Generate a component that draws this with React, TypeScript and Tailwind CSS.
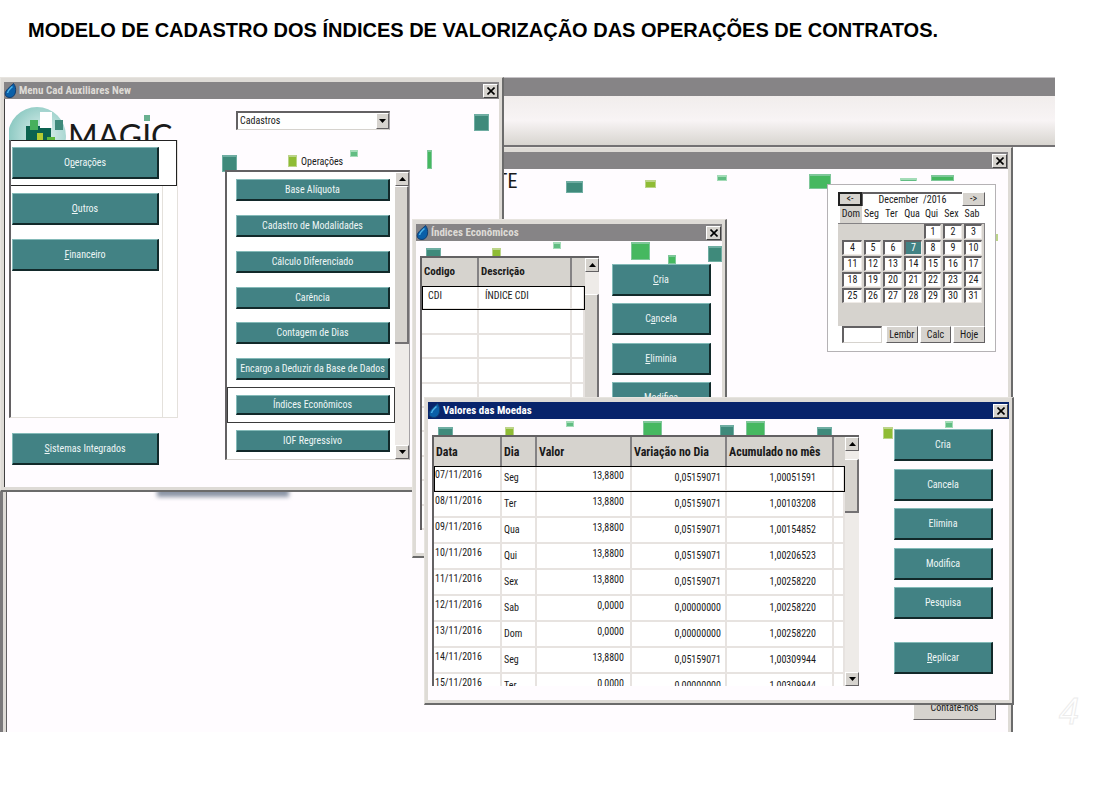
import React, { FC, ReactNode } from 'react';
import clsx from 'clsx';

type Tone = 'teal' | 'green' | 'lime' | 'mint';
type Square = [x: number, y: number, w: number, h: number, tone: Tone];

const TONES: Record<Tone, { fill: string; edge: string }> = {
  teal: { fill: '#3f8a7b', edge: '#6fada2' },
  green: { fill: '#46b860', edge: '#7fc79a' },
  lime: { fill: '#8fbc35', edge: '#bcd48a' },
  mint: { fill: '#62bd83', edge: '#a4dcb8' },
};

const Squares: FC<{ items: Square[] }> = ({ items }) => (
  <svg className="pointer-events-none absolute inset-0 size-full" aria-hidden="true">
    {items.map(([x, y, w, h, tone]) => (
      <g key={`${x}-${y}`}>
        <rect x={x} y={y} width={w} height={h} fill={TONES[tone].edge} />
        <rect x={x + 1} y={y + 2} width={w - 2} height={Math.max(h - 3, 1)} fill={TONES[tone].fill} />
      </g>
    ))}
  </svg>
);

const Drop: FC = () => (
  <svg width="13" height="15" viewBox="0 0 13 15" aria-hidden="true">
    <path d="M9.500 0.500C11.500 3 12 6 11.500 9c-.5 3-2.500 5.500-5.500 5.500C3 14.500 1 13 1.200 10.500 1.500 7 6 4 9.500 0.500Z" fill="#0a5fa8" stroke="#123d70" />
    <path d="M8.500 3.500c-2 2-4.500 3.500-5 6.500" fill="none" stroke="#4fb4e8" strokeWidth="1.500" />
  </svg>
);

const CloseButton: FC = () => (
  <button
    type="button"
    aria-label="Fechar"
    className="flex h-[14px] w-[15px] items-center justify-center border border-t-white border-r-[#404040] border-b-[#404040] border-l-white bg-[#d6d3ce]"
  >
    <svg width="8" height="8" viewBox="0 0 8 8" aria-hidden="true">
      <path d="M0.500 0.500l7 7M7.500 0.500l-7 7" stroke="#000" strokeWidth="1.600" />
    </svg>
  </button>
);

interface WindowProps {
  title?: string;
  active?: boolean;
  className: string;
  children: ReactNode;
}

const Window: FC<WindowProps> = ({ title, active, className, children }) => (
  <section
    className={clsx(
      'absolute flex flex-col border-t border-r-2 border-b-2 border-l border-t-[#e7e4df] border-r-[#6b6b6b] border-b-[#6b6b6b] border-l-[#e7e4df] bg-[#dedbd6] p-[3px] pt-1',
      className,
    )}
  >
    <header
      className={clsx(
        'flex h-[17px] shrink-0 items-center justify-between pr-px',
        active ? 'bg-[#08246b] text-white' : 'bg-[#868486] text-[#dedbd6]',
      )}
    >
      <div className="flex items-center gap-0.5">
        {title && <Drop />}
        <h2 className="text-[11px] font-bold whitespace-nowrap">{title}</h2>
      </div>
      <CloseButton />
    </header>
    <div className="relative min-h-0 flex-1 bg-[#fffcff]">{children}</div>
  </section>
);

interface TealButtonProps {
  label: string;
  hotkey?: number;
  className?: string;
}

const TealButton: FC<TealButtonProps> = ({ label, hotkey, className }) => (
  <button
    type="button"
    className={clsx(
      'flex items-center justify-center border-t border-r-2 border-b-2 border-l border-t-[#84bab8] border-r-[#12292a] border-b-[#12292a] border-l-[#84bab8] bg-[#428284] pt-px whitespace-nowrap text-[#eef6f6]',
      className,
    )}
  >
    {hotkey === undefined ? (
      label
    ) : (
      <span>
        {label.slice(0, hotkey)}
        <u>{label[hotkey]}</u>
        {label.slice(hotkey + 1)}
      </span>
    )}
  </button>
);

const ArrowButton: FC<{ down?: boolean }> = ({ down }) => (
  <button
    type="button"
    aria-label={down ? 'Descer' : 'Subir'}
    className="flex h-[14px] w-full shrink-0 items-center justify-center border border-t-white border-r-[#636163] border-b-[#636163] border-l-white bg-[#d6d3ce]"
  >
    <svg width="7" height="4" viewBox="0 0 7 4" aria-hidden="true">
      <path d={down ? 'M0 0h7L3.500 4Z' : 'M0 4h7L3.500 0Z'} fill="#000" />
    </svg>
  </button>
);

const ScrollBar: FC<{ thumb: string }> = ({ thumb }) => (
  <div className="flex w-[14px] shrink-0 flex-col bg-[#eeebe8]">
    <ArrowButton />
    <div className="min-h-0 flex-1 overflow-hidden">
      <div className={clsx('border-t border-r-2 border-b-2 border-t-white border-r-[#737173] border-b-[#737173] bg-[#d6d3ce]', thumb)} />
    </div>
    <ArrowButton down />
  </div>
);

const MagicLogo: FC = () => (
  <svg width="169" height="41" viewBox="0 0 169 41" className="block" role="img" aria-label="Magic">
    <defs>
      <radialGradient id="globe" cx="0.6" cy="0.5" r="0.6">
        <stop offset="0" stopColor="#e4f3f1" />
        <stop offset="1" stopColor="#8cc9c2" />
      </radialGradient>
    </defs>
    <circle cx="28" cy="37" r="29" fill="url(#globe)" />
    <rect x="17" y="27" width="25" height="14" fill="#0c6350" />
    <rect x="21" y="21" width="8" height="10" fill="#46b05c" />
    <rect x="31" y="13" width="12" height="16" fill="#fff" />
    <rect x="46" y="21" width="8" height="10" fill="#3f8a7b" />
    <rect x="28" y="34" width="6" height="7" fill="#b4cc32" />
    <rect x="38" y="38" width="8" height="3" fill="#5cb83c" />
    <text x="59" y="49" fontFamily="Lato, sans-serif" fontSize="32" fill="#1a1a1a">
      MAGIC
    </text>
    <rect x="135" y="16" width="6" height="6" fill="#6ab090" />
  </svg>
);

const operations = [
  'Base Alíquota',
  'Cadastro de Modalidades',
  'Cálculo Diferenciado',
  'Carência',
  'Contagem de Dias',
  'Encargo a Deduzir da Base de Dados',
  'Índices Econômicos',
  'IOF Regressivo',
];

const MenuWindow: FC = () => (
  <Window title="Menu Cad Auxiliares New" className="top-0 left-0 h-[415px] w-[504px]">
    <Squares
      items={[
        [218, 56, 15, 17, 'teal'],
        [284, 56, 9, 12, 'lime'],
        [346, 51, 8, 7, 'mint'],
        [423, 51, 5, 19, 'green'],
        [470, 15, 15, 17, 'teal'],
      ]}
    />
    <div className="relative flex h-full border-l border-[#404040] pl-1">
      <div className="w-[169px]">
        <MagicLogo />
        <div className="flex h-[278px] border-r border-b border-l-2 border-[#e4e1dc] border-l-[#636163] bg-white">
          <div className="w-full">
            <div className="h-[46px] border border-l-0 border-[#222] pt-[6px] pl-px">
              <TealButton label="Operações" hotkey={1} className="h-8 w-[147px]" />
            </div>
            <div className="flex h-[46px] w-[152px] items-center border-r border-[#e4e1dc] pl-px">
              <TealButton label="Outros" hotkey={0} className="h-8 w-[147px]" />
            </div>
            <div className="flex h-[46px] w-[152px] items-center border-r border-[#e4e1dc] pl-px">
              <TealButton label="Financeiro" hotkey={0} className="h-8 w-[147px]" />
            </div>
            <div className="h-[139px] w-[152px] border-r border-[#e4e1dc]" />
          </div>
        </div>
        <TealButton label="Sistemas Integrados" hotkey={0} className="mt-[15px] ml-[3px] h-8 w-[147px]" />
      </div>
      <div className="ml-[47px] w-[185px] pt-3">
        <div className="relative ml-[11px] h-[19px] w-[154px]">
          <select
            aria-label="Menu"
            className="block size-full appearance-none border-t-2 border-r border-b border-l-2 border-t-[#636163] border-r-[#a5a2a5] border-b-[#d6d3ce] border-l-[#636163] bg-white px-0.5"
          >
            <option>Cadastros</option>
          </select>
          <span className="pointer-events-none absolute top-[2px] right-px flex h-4 w-[13px] items-center justify-center border border-t-white border-r-[#636163] border-b-[#636163] border-l-white bg-[#d6d3ce]">
            <svg width="7" height="4" viewBox="0 0 7 4" aria-hidden="true">
              <path d="M0 0h7L3.500 4Z" fill="#000" />
            </svg>
          </span>
        </div>
        <h3 className="mt-6 pl-[76px]">Operações</h3>
        <div className="flex h-[290px] border-t-2 border-r border-b border-l-2 border-t-[#636163] border-r-[#a5a2a5] border-b-[#d6d3ce] border-l-[#636163] bg-white">
          <div className="flex flex-1 flex-col">
            {operations.map((name) => {
              const selected = name === 'Índices Econômicos';
              return (
                <div
                  key={name}
                  className={clsx('flex flex-1 items-center border', selected ? 'border-[#3a3a3a]' : 'border-transparent')}
                >
                  <TealButton label={name} className={clsx('ml-2 w-[154px]', selected ? 'h-5' : 'h-[22px]')} />
                </div>
              );
            })}
          </div>
          <ScrollBar thumb="h-[158px]" />
        </div>
      </div>
    </div>
  </Window>
);

const headCell = 'border-r-2 border-r-[#848284] bg-[#d6d3ce] px-0.5 text-left font-bold whitespace-nowrap';
const cell = 'border-r-2 border-b-2 border-[#e7e3e0] p-0 align-top whitespace-nowrap';

const IndicesWindow: FC = () => (
  <Window title="Índices Econômicos" className="top-[142px] left-[412px] h-[339px] w-[315px]">
    <Squares
      items={[
        [10, 7, 15, 12, 'teal'],
        [76, 7, 9, 12, 'lime'],
        [137, 1, 8, 7, 'mint'],
        [215, 1, 19, 18, 'green'],
        [252, 14, 8, 9, 'green'],
        [292, 5, 14, 16, 'teal'],
      ]}
    />
    <div className="relative flex items-start pl-1">
      <div className="mt-[15px] flex h-[274px] w-[179px] overflow-hidden border-t-2 border-l-2 border-[#636163] bg-white">
        <table className="w-[163px] table-fixed border-separate border-spacing-0">
          <colgroup>
            <col className="w-[57px]" />
            <col className="w-[93px]" />
            <col />
          </colgroup>
          <thead className="text-[11px]">
            <tr className="h-7">
              <th className={headCell}>Codigo</th>
              <th className={headCell}>Descrição</th>
              <th className="bg-[#d6d3ce]" />
            </tr>
          </thead>
          <tbody>
            <tr className="h-6 outline-1 -outline-offset-1 outline-black">
              <td className={clsx(cell, 'pt-0.5 pl-1.5')}>CDI</td>
              <td className={clsx(cell, 'pt-0.5 pl-1.5')}>ÍNDICE CDI</td>
              <td className={cell} />
            </tr>
            {Array.from({ length: 9 }, (_, i) => (
              <tr key={i} className="h-6">
                <td className={cell} />
                <td className={cell} />
                <td className={cell} />
              </tr>
            ))}
          </tbody>
        </table>
        <div className="flex h-full">
          <ScrollBar thumb="mt-[22px] h-[190px]" />
        </div>
      </div>
      <div className="mt-[23px] ml-[13px] flex h-[150px] w-[99px] flex-col justify-between">
        <TealButton label="Cria" hotkey={0} className="h-8" />
        <TealButton label="Cancela" hotkey={1} className="h-8" />
        <TealButton label="Eliminia" hotkey={0} className="h-8" />
        <TealButton label="Modifica" className="h-8" />
      </div>
    </div>
  </Window>
);

const rates = [
  ['07/11/2016', 'Seg', '13,8800', '0,05159071', '1,00051591'],
  ['08/11/2016', 'Ter', '13,8800', '0,05159071', '1,00103208'],
  ['09/11/2016', 'Qua', '13,8800', '0,05159071', '1,00154852'],
  ['10/11/2016', 'Qui', '13,8800', '0,05159071', '1,00206523'],
  ['11/11/2016', 'Sex', '13,8800', '0,05159071', '1,00258220'],
  ['12/11/2016', 'Sab', '0,0000', '0,00000000', '1,00258220'],
  ['13/11/2016', 'Dom', '0,0000', '0,00000000', '1,00258220'],
  ['14/11/2016', 'Seg', '13,8800', '0,05159071', '1,00309944'],
  ['15/11/2016', 'Ter', '0,0000', '0,00000000', '1,00309944'],
];

const ValoresWindow: FC = () => (
  <Window title="Valores das Moedas" active className="top-[320px] left-[424px] h-[308px] w-[590px]">
    <Squares
      items={[
        [10, 8, 15, 12, 'teal'],
        [77, 8, 9, 12, 'lime'],
        [138, 2, 8, 6, 'mint'],
        [215, 2, 19, 18, 'green'],
        [292, 6, 14, 14, 'teal'],
        [318, 2, 19, 18, 'green'],
        [389, 8, 15, 12, 'teal'],
        [455, 8, 10, 12, 'lime'],
        [517, 2, 8, 7, 'mint'],
      ]}
    />
    <div className="relative flex items-start pl-1">
      <div className="mt-4 flex h-[251px] w-[427px] overflow-hidden border-t-2 border-l-2 border-[#636163] bg-white">
        <table className="w-[411px] table-fixed border-separate border-spacing-0">
          <colgroup>
            <col className="w-[68px]" />
            <col className="w-[35px]" />
            <col className="w-[95px]" />
            <col className="w-[95px]" />
            <col className="w-[107px]" />
            <col />
          </colgroup>
          <thead className="text-xs">
            <tr className="h-[29px]">
              {['Data', 'Dia', 'Valor', 'Variação no Dia', 'Acumulado no mês'].map((name) => (
                <th key={name} className={headCell}>
                  {name}
                </th>
              ))}
              <th className="bg-[#d6d3ce]" />
            </tr>
          </thead>
          <tbody>
            {rates.map(([date, day, value, change, total], i) => (
              <tr key={date} className={clsx('h-[26px]', i === 0 && 'outline-1 -outline-offset-1 outline-black')}>
                <td className={clsx(cell, 'pt-px pl-px')}>{date}</td>
                <td className={clsx(cell, 'pt-1 pl-0.5')}>{day}</td>
                <td className={clsx(cell, 'pt-0.5 pr-1.5 text-right')}>{value}</td>
                <td className={clsx(cell, 'pt-1 pr-1 text-right')}>{change}</td>
                <td className={clsx(cell, 'pt-1 pr-4 text-right')}>{total}</td>
                <td className={clsx(cell, 'border-r-0')} />
              </tr>
            ))}
          </tbody>
        </table>
        <div className="flex h-full">
          <ScrollBar thumb="mt-2 h-[54px]" />
        </div>
      </div>
      <div className="mt-[10px] ml-[35px] w-[99px]">
        <div className="flex h-[190px] flex-col justify-between">
          {['Cria', 'Cancela', 'Elimina', 'Modifica', 'Pesquisa'].map((name) => (
            <TealButton key={name} label={name} className="h-8" />
          ))}
        </div>
        <TealButton label="Replicar" hotkey={0} className="mt-[23px] h-8 w-full" />
      </div>
    </div>
  </Window>
);

const greyButton = 'border border-t-white border-r-[#636163] border-b-[#636163] border-l-white bg-[#d6d3ce] text-center';
const weekGrid = 'grid grid-cols-[22px_19px_21px_20px_19px_21px_20px]';

const Calendar: FC = () => (
  <div className="w-[169px] border border-[#b5b2b5] bg-white px-[10px] pt-[7px] pb-2">
    <div className="flex h-[14px] leading-3">
      <button type="button" aria-label="Mês anterior" className="w-6 border-2 border-[#222] bg-[#d6d3ce] leading-[10px]">
        &lt;-
      </button>
      <div className="flex-1 border-t-2 border-l border-[#636163] text-center">December&nbsp; /2016</div>
      <button type="button" aria-label="Próximo mês" className={clsx(greyButton, 'w-[23px]')}>
        -&gt;
      </button>
    </div>
    <div className={clsx(weekGrid, 'h-[17px] pl-0.5 text-center')}>
      {['Dom', 'Seg', 'Ter', 'Qua', 'Qui', 'Sex', 'Sab'].map((day) => (
        <span key={day} className={clsx(day === 'Dom' && 'bg-[#d6d3ce]')}>
          {day}
        </span>
      ))}
    </div>
    <div className={clsx(weekGrid, 'h-[103px] auto-rows-[16px] content-start border-t border-r border-[#848284] bg-[#d6d3ce] pl-1')}>
      {Array.from({ length: 31 }, (_, i) => i + 1).map((day) => (
        <button
          key={day}
          type="button"
          className={clsx(
            'mr-[2px] h-[15px] border-t-2 border-r border-b border-l-2 border-t-[#636163] border-r-[#efebe7] border-b-[#efebe7] border-l-[#636163] text-center leading-3',
            day === 1 && 'col-start-5',
            day === 7 ? 'bg-[#428284] text-white' : 'bg-white',
          )}
        >
          {day}
        </button>
      ))}
    </div>
    <div className="flex h-[17px] gap-0.5 pl-1 leading-[14px]">
      <input
        aria-label="Lembrete"
        className="mr-0.5 w-10 border-t-2 border-r border-b border-l-2 border-t-[#636163] border-r-[#d6d3ce] border-b-[#d6d3ce] border-l-[#636163] bg-white"
      />
      <button type="button" className={clsx(greyButton, 'flex-1')}>Lembr</button>
      <button type="button" className={clsx(greyButton, 'flex-1')}>Calc</button>
      <button type="button" className={clsx(greyButton, 'flex-1')}>Hoje</button>
    </div>
  </div>
);

const MainWindow: FC = () => (
  <Window className="top-[70px] -bottom-8 left-0 w-[1013px] border-l-[3px] border-l-[#7b797b]!">
    <Squares
      items={[
        [560, 12, 17, 12, 'teal'],
        [639, 11, 11, 8, 'lime'],
        [711, 6, 10, 6, 'mint'],
        [803, 5, 22, 15, 'green'],
        [894, 9, 17, 3, 'mint'],
        [925, 6, 23, 6, 'green'],
        [990, 65, 2, 7, 'lime'],
      ]}
    />
    <div className="relative flex h-full flex-col items-end border-l border-[#636163] pt-[15px] pr-3 pb-[39px]">
      <Calendar />
      <button type="button" className={clsx(greyButton, 'mt-auto h-6 w-[83px]')}>Contate-nos</button>
      <span className="absolute top-0 left-[490px] text-xl leading-6">TE</span>
      <span className="absolute top-[316px] left-[150px] h-3 w-[132px] bg-[#8c95a6] blur-[2px]" />
    </div>
  </Window>
);

const App: FC = () => (
  <div className="flex min-h-screen flex-col bg-white font-['Roboto_Condensed','Liberation_Sans',sans-serif] text-[10px] leading-4 text-[#1a1a1a]">
    <h1 className="h-[77px] pt-[15px] pl-[28px] font-['Liberation_Sans',sans-serif] text-xl leading-[30px] font-bold whitespace-nowrap text-black">
      MODELO DE CADASTRO DOS ÍNDICES DE VALORIZAÇÃO DAS OPERAÇÕES DE CONTRATOS.
    </h1>
    <main className="relative mr-[61px] mb-[54px] flex-1">
      <div className="absolute inset-0 overflow-hidden">
        <div className="h-[19px] border-t border-[#c6c3c6] bg-[#868486]" />
        <div className="h-[51px] border-b-2 border-[#737173] bg-linear-to-b from-[#f1edec] via-[#f8f4f5] to-[#d8d5d0]" />
        <MainWindow />
        <MenuWindow />
        <IndicesWindow />
        <ValoresWindow />
      </div>
      <span className="absolute -right-6 bottom-0 font-['Liberation_Sans',sans-serif] text-4xl text-white italic [-webkit-text-stroke:1px_#ececec]">4</span>
    </main>
  </div>
);

export default App;
